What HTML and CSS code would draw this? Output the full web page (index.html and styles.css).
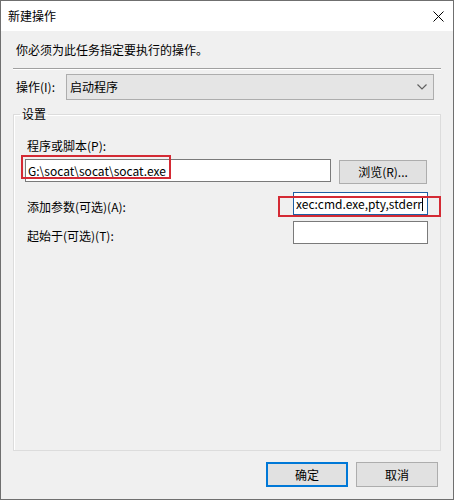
FILE: index.html
```html
<!DOCTYPE html>
<html lang="zh-CN">
<head>
<meta charset="utf-8">
<title>新建操作</title>
<link rel="stylesheet" href="styles.css">
</head>
<body>
<div class="window">
  <div class="titlebar">
    <span class="title">新建操作</span>
    <svg class="close" width="11" height="11" viewBox="0 0 11 11">
      <path d="M0.5 0.5 L10.5 10.5 M10.5 0.5 L0.5 10.5" stroke="#000" stroke-width="1" fill="none"/>
    </svg>
  </div>
  <div class="content">
    <div class="desc">你必须为此任务指定要执行的操作。</div>
    <div class="separator"></div>
    <div class="action-row">
      <span class="action-label">操作(I):</span>
      <div class="combo">
        <span class="combo-text">启动程序</span>
        <svg class="chevron" width="10" height="6" viewBox="0 0 10 6">
          <path d="M0.5 0.5 L5 5 L9.5 0.5" stroke="#606060" stroke-width="1.2" fill="none"/>
        </svg>
      </div>
    </div>
    <fieldset class="group">
      <legend class="legend">设置</legend>
      <div class="group-body">
        <div class="field-label first">程序或脚本(P):</div>
        <div class="row row-program">
          <div class="textbox program"><span class="tb-text">G:\socat\socat\socat.exe</span></div>
          <div class="button browse">浏览(R)...</div>
          <div class="mark mark-program"></div>
        </div>
        <div class="row row-args">
          <span class="field-label inline">添加参数(可选)(A):</span>
          <div class="textbox small focused"><span class="tb-text clip">xec:cmd.exe,pty,stderr</span><span class="caret"></span></div>
          <div class="mark mark-args"></div>
        </div>
        <div class="row row-start">
          <span class="field-label inline">起始于(可选)(T):</span>
          <div class="textbox small"></div>
        </div>
      </div>
    </fieldset>
    <div class="buttons">
      <div class="button dlg default">确定</div>
      <div class="button dlg">取消</div>
    </div>
  </div>
</div>
</body>
</html>
```
FILE: styles.css
```css
html, body {
  margin: 0;
  padding: 0;
  background: #f0f0f0;
}
body {
  font-family: "Noto Sans CJK SC", "Noto Sans", sans-serif;
  font-size: 12px;
  line-height: 16px;
  color: #000;
}
.window {
  width: 454px;
  height: 500px;
  box-sizing: border-box;
  border: 1px solid #6f6f6f;
  background: #f0f0f0;
  display: flex;
  flex-direction: column;
}
.titlebar {
  height: 30px;
  background: #fff;
  display: flex;
  align-items: center;
  justify-content: space-between;
  padding: 0 9px 0 7px;
  flex: none;
}
.title {
  font-size: 12px;
}
.close {
  display: block;
}
.content {
  flex: 1;
  display: flex;
  flex-direction: column;
  padding: 0 12px 12px 12px;
}
.desc {
  margin: 11px 0 0 3px;
}
.separator {
  margin-top: 10px;
  height: 0;
  border-top: 1px solid #a0a0a0;
  border-bottom: 1px solid #ffffff;
}
.action-row {
  margin-top: 4px;
  display: flex;
  align-items: center;
  padding-left: 3px;
}
.action-label {
  width: 50px;
}
.combo {
  width: 368px;
  height: 26px;
  box-sizing: border-box;
  border: 1px solid #adadad;
  background: #e5e5e5;
  display: flex;
  align-items: center;
  justify-content: space-between;
  padding: 0 6px 0 3px;
}
.chevron {
  display: block;
}
.group {
  flex: 1;
  margin: 6px 0 0 0;
  padding: 0;
  border: 1px solid #dcdcdc;
  box-shadow: inset 1px 1px 0 #ffffff;
  min-width: 0;
}
.legend {
  margin-left: 6px;
  padding: 0 2px;
  line-height: 16px;
}
.group-body {
  position: relative;
  padding: 0 12px 0 11px;
}
.field-label {
  margin-left: 2px;
}
.field-label.first {
  margin-top: 16px;
}
.row {
  position: relative;
  display: flex;
  align-items: flex-start;
}
.row-program {
  margin-top: 5px;
  gap: 8px;
}
.row-args {
  margin-top: 8px;
}
.row-start {
  margin-top: 6px;
}
.field-label.inline {
  margin-top: 7px;
}
.textbox {
  height: 23px;
  box-sizing: border-box;
  background: #fff;
  border: 1px solid #7a7a7a;
  display: flex;
  align-items: center;
  padding: 0 2px 0 2px;
  overflow: hidden;
}
.textbox.program {
  width: 306px;
}
.textbox.small {
  width: 135px;
  margin-left: auto;
}
.textbox.focused {
  border-color: #1e5fa3;
}
.tb-text {
  white-space: nowrap;
}
.tb-text.clip {
  overflow: hidden;
  flex: 0 1 auto;
  min-width: 0;
}
.caret {
  flex: none;
  width: 1px;
  height: 15px;
  background: #000;
}
.button {
  box-sizing: border-box;
  background: #e1e1e1;
  border: 1px solid #adadad;
  display: flex;
  align-items: center;
  justify-content: center;
}
.browse {
  width: 88px;
  height: 24px;
  margin-top: 1px;
}
.mark {
  position: absolute;
  box-sizing: border-box;
  border: 2px solid #d42a34;
}
.mark-program {
  left: -4px;
  top: -4px;
  width: 150px;
  height: 24px;
}
.mark-args {
  left: 253px;
  top: 4px;
  width: 163px;
  height: 21px;
}
.buttons {
  margin-top: 11px;
  display: flex;
  justify-content: flex-end;
  gap: 8px;
  padding-right: 3px;
}
.dlg {
  width: 82px;
  height: 25px;
}
.default {
  border: 2px solid #0078d7;
}
```
